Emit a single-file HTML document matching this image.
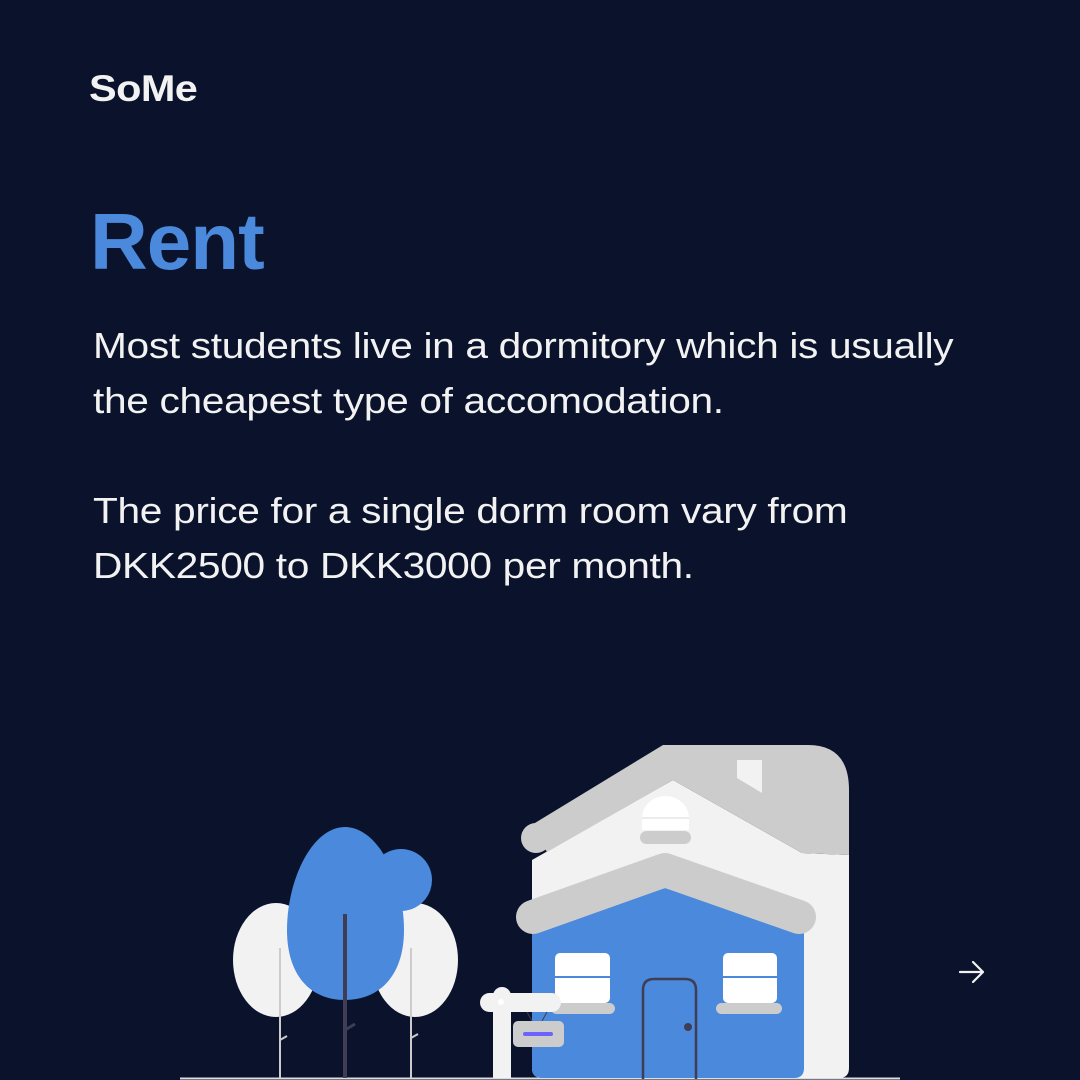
<!DOCTYPE html>
<html><head><meta charset="utf-8"><style>
html,body{margin:0;padding:0}
body{width:1080px;height:1080px;background:#0a132b;position:relative;overflow:hidden;font-family:"Liberation Sans",sans-serif;color:#f2f2f2}
.logo{position:absolute;left:89px;top:68px;font-size:37px;font-weight:bold;letter-spacing:-0.5px;transform:scaleX(1.12);transform-origin:0 0}
.h{position:absolute;left:90px;top:196px;font-size:80px;font-weight:bold;color:#4a89dc;letter-spacing:-1px}
.p{position:absolute;left:93px;font-size:36px;line-height:55px;letter-spacing:-0.3px;transform:scaleX(1.13);transform-origin:0 0;white-space:nowrap}
</style></head><body>
<div class="logo">SoMe</div>
<div class="h">Rent</div>
<div class="p" style="top:318px">Most students live in a dormitory which is usually<br>the cheapest type of accomodation.</div>
<div class="p" style="top:483px">The price for a single dorm room vary from<br>DKK2500 to DKK3000 per month.</div>
<svg width="1080" height="1080" style="position:absolute;left:0;top:0">
<line x1="180" y1="1078.5" x2="900" y2="1078.5" stroke="#ddd" stroke-width="2"/>
<ellipse cx="276" cy="960" rx="43" ry="57" fill="#f2f2f2"/>
<ellipse cx="415" cy="960" rx="43" ry="57" fill="#f2f2f2"/>
<circle cx="401" cy="880" r="31" fill="#4a89dc"/>
<path d="M345,827 C378,827 404,880 404,930 C404,975 380,1000 345,1000 C310,1000 287,975 287,930 C287,880 312,827 345,827Z" fill="#4a89dc"/>
<line x1="280" y1="948" x2="280" y2="1078" stroke="#ccc" stroke-width="2"/>
<line x1="280" y1="1040" x2="287" y2="1036" stroke="#ccc" stroke-width="2"/>
<line x1="411" y1="948" x2="411" y2="1078" stroke="#ccc" stroke-width="2"/>
<line x1="411" y1="1038" x2="418" y2="1034" stroke="#ccc" stroke-width="2"/>
<line x1="345" y1="914" x2="345" y2="1078" stroke="#3f3d56" stroke-width="4"/>
<line x1="345" y1="1030" x2="355" y2="1024" stroke="#3f3d56" stroke-width="3"/>
<path d="M532,860 L673,780 L802,853 L849,855 L849,1068 Q849,1078 839,1078 L542,1078 Q532,1078 532,1068Z" fill="#f2f2f2"/>
<path d="M530,826 L663,745 L808,745 Q849,745 849,790 L849,855 L802,853 L673,780 L547,852 Z" fill="#ccc"/>
<circle cx="536" cy="838" r="15" fill="#ccc"/>
<path d="M737,760 L762,760 L762,793 L737,778Z" fill="#f2f2f2"/>
<path d="M642,818 A23.5,22 0 0 1 689,818 L689,830 L642,830Z" fill="#fff"/>
<line x1="642" y1="818" x2="689" y2="818" stroke="#e6e6e6" stroke-width="1.5"/>
<rect x="640" y="831" width="51" height="13" rx="6.5" fill="#ccc"/>
<path d="M532,933 L665,888 L804,933 L804,1068 Q804,1078 794,1078 L542,1078 Q532,1078 532,1068Z" fill="#4a89dc"/>
<path d="M533,917 L665,870 L799,917" fill="none" stroke="#ccc" stroke-width="34" stroke-linecap="round" stroke-linejoin="round"/>
<rect x="555" y="953" width="55" height="50" rx="5" fill="#fff"/>
<line x1="555" y1="977" x2="610" y2="977" stroke="#4a89dc" stroke-width="2"/>
<rect x="551" y="1003" width="64" height="11" rx="5.5" fill="#ccc"/>
<rect x="723" y="953" width="54" height="50" rx="5" fill="#fff"/>
<line x1="723" y1="977" x2="777" y2="977" stroke="#4a89dc" stroke-width="2"/>
<rect x="716" y="1003" width="66" height="11" rx="5.5" fill="#ccc"/>
<path d="M643,1079 L643,990 Q643,979 654,979 L685,979 Q696,979 696,990 L696,1079" fill="none" stroke="#3f3d56" stroke-width="2.5"/>
<circle cx="688" cy="1027" r="4" fill="#3f3d56"/>
<rect x="493" y="1000" width="18" height="78" fill="#f2f2f2"/>
<circle cx="502" cy="996" r="9" fill="#f2f2f2"/>
<rect x="480" y="993" width="81" height="19" rx="9.5" fill="#f2f2f2"/>
<circle cx="501" cy="1002" r="3" fill="#fff"/>
<line x1="527" y1="1012" x2="532" y2="1021" stroke="#3f3d56" stroke-width="1"/>
<line x1="547" y1="1012" x2="542" y2="1021" stroke="#3f3d56" stroke-width="1"/>
<rect x="513" y="1021" width="51" height="26" rx="5" fill="#ccc"/>
<rect x="523" y="1032" width="30" height="4" rx="2" fill="#6c63ff"/>
<path d="M960,972 L983,972 M973,962 L983,972 L973,982" fill="none" stroke="#f2f2f2" stroke-width="2.2" stroke-linecap="round" stroke-linejoin="round"/>
</svg>
</body></html>
